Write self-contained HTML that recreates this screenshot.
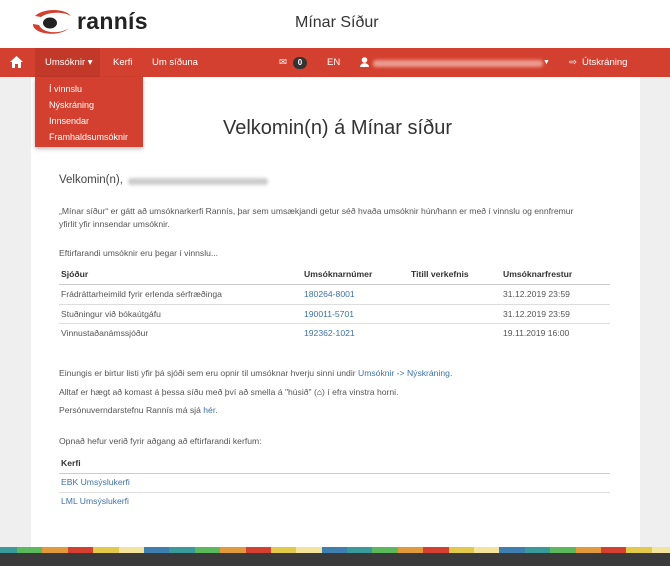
<!DOCTYPE html>
<html><head><meta charset="utf-8"><style>
*{margin:0;padding:0;box-sizing:border-box}
body{width:670px;height:566px;overflow:hidden;background:#efefef;font-family:"Liberation Sans",sans-serif;color:#444;position:relative}
.a{position:absolute;white-space:nowrap}
#hdr{position:absolute;left:0;top:0;width:670px;height:48px;background:#fff}
#nav{position:absolute;left:0;top:48px;width:670px;height:29px;background:#d4402f;color:#fff;font-size:9.5px}
#nav .a{top:9px}
#panel{position:absolute;left:31px;top:77px;width:609px;height:470px;background:#fff}
.t{font-size:8.6px;color:#555}
.lk{color:#3d72a8}
.hl{position:absolute;left:59px;width:551px;height:1px;background:#ddd}
.b{font-weight:bold;color:#333}
.blur{position:absolute;height:7px;border-radius:3px;background:#e8e8e8;filter:blur(1.5px)}
#band{position:absolute;left:0;top:547px;width:670px;height:6px;display:flex}
#band div{width:25.4px;flex:none}
#foot{position:absolute;left:0;top:553px;width:670px;height:13px;background:#3a3a3a}
</style></head><body>
<div id="hdr">
<svg class="a" style="left:29px;top:8px" width="44" height="28" viewBox="0 0 44 28"><path d="M6 8 C14 0 36 0 42 8 C34 3 18 4 12 9 Z" fill="#d4402f"/><path d="M4 16 C3 26 30 30 40 20 C32 26 14 26 10 17 Z" fill="#d4402f"/><ellipse cx="21" cy="15" rx="7" ry="5.5" fill="#222"/></svg>
<div class="a" style="left:77px;top:8px;font-size:23px;font-weight:bold;color:#222;letter-spacing:0.3px">rannís</div>
<div class="a" style="left:295px;top:14px;font-size:16px;color:#333">Mínar Síður</div>
</div>
<div id="nav">
<svg class="a" style="left:10px;top:8px!important" width="13" height="12" viewBox="0 0 13 12"><path d="M6.5 0 L13 6 L11 6 L11 12 L8 12 L8 8 L5 8 L5 12 L2 12 L2 6 L0 6 Z" fill="#fff"/></svg>
<div class="a" style="left:35px;top:0!important;width:65px;height:29px;background:#c2392a"></div>
<div class="a" style="left:45px">Umsóknir ▾</div>
<div class="a" style="left:113px">Kerfi</div>
<div class="a" style="left:152px">Um síðuna</div>
<div class="a" style="left:279px">✉</div>
<div class="a" style="left:293px;top:9px!important;width:14px;height:12px;border-radius:6px;background:#333;font-size:8px;text-align:center;line-height:12px;font-weight:bold">0</div>
<div class="a" style="left:327px">EN</div>
<svg class="a" style="left:360px;top:9px!important" width="9" height="10" viewBox="0 0 9 10"><circle cx="4.5" cy="3" r="2.8" fill="#fff"/><path d="M0 10 C0 5 9 5 9 10Z" fill="#fff"/></svg>
<div class="blur" style="left:373px;top:12px;width:170px;background:#ec9b90"></div>
<div class="a" style="left:543px;font-size:7px;top:11px!important">▼</div>
<div class="a" style="left:569px">⇨</div>
<div class="a" style="left:582px">Útskráning</div>
</div>
<div id="panel"></div>
<div class="a" style="left:35px;top:77px;width:108px;height:70px;background:#d4402f;box-shadow:0 2px 4px rgba(0,0,0,.25)"></div>
<div class="a" style="left:49px;top:81px;font-size:9px;color:#fff;line-height:16px;white-space:normal">Í vinnslu<br>Nýskráning<br>Innsendar<br>Framhaldsumsóknir</div>
<div class="a" style="left:223px;top:117px;font-size:20px;color:#333">Velkomin(n) á Mínar síður</div>
<div class="a" style="left:59px;top:174px;font-size:11.5px;color:#444">Velkomin(n),</div>
<div class="blur" style="left:128px;top:178px;width:140px;background:#ccc"></div>
<div class="a t" style="left:59px;top:205px;line-height:13px">„Mínar síður“ er gátt að umsóknarkerfi Rannís, þar sem umsækjandi getur séð hvaða umsóknir hún/hann er með í vinnslu og ennfremur<br>yfirlit yfir innsendar umsóknir.</div>
<div class="a t" style="left:59px;top:248px">Eftirfarandi umsóknir eru þegar í vinnslu...</div>
<div class="a t b" style="left:61px;top:269px">Sjóður</div>
<div class="a t b" style="left:304px;top:269px">Umsóknarnúmer</div>
<div class="a t b" style="left:411px;top:269px">Titill verkefnis</div>
<div class="a t b" style="left:503px;top:269px">Umsóknarfrestur</div>
<div class="hl" style="top:284px;background:#ccc"></div>
<div class="a t" style="left:61px;top:289px">Frádráttarheimild fyrir erlenda sérfræðinga</div>
<div class="a t lk" style="left:304px;top:289px">180264-8001</div>
<div class="a t" style="left:503px;top:289px">31.12.2019 23:59</div>
<div class="hl" style="top:304px"></div>
<div class="a t" style="left:61px;top:309px">Stuðningur við bókaútgáfu</div>
<div class="a t lk" style="left:304px;top:309px">190011-5701</div>
<div class="a t" style="left:503px;top:309px">31.12.2019 23:59</div>
<div class="hl" style="top:323px"></div>
<div class="a t" style="left:61px;top:328px">Vinnustaðanámssjóður</div>
<div class="a t lk" style="left:304px;top:328px">192362-1021</div>
<div class="a t" style="left:503px;top:328px">19.11.2019 16:00</div>
<div class="a t" style="left:59px;top:368px">Einungis er birtur listi yfir þá sjóði sem eru opnir til umsóknar hverju sinni undir <span class="lk">Umsóknir -&gt; Nýskráning</span>.</div>
<div class="a t" style="left:59px;top:387px">Alltaf er hægt að komast á þessa síðu með því að smella á "húsið" (<b style="color:#222">⌂</b>) í efra vinstra horni.</div>
<div class="a t" style="left:59px;top:405px">Persónuverndarstefnu Rannís má sjá <span class="lk">hér</span>.</div>
<div class="a t" style="left:59px;top:436px">Opnað hefur verið fyrir aðgang að eftirfarandi kerfum:</div>
<div class="a t b" style="left:61px;top:458px">Kerfi</div>
<div class="hl" style="top:473px;background:#ccc"></div>
<div class="a t lk" style="left:61px;top:477px">EBK Umsýslukerfi</div>
<div class="hl" style="top:492px"></div>
<div class="a t lk" style="left:61px;top:496px">LML Umsýslukerfi</div>
<div id="band">
<div style="background:#3a9a9a;width:17px"></div><div style="background:#5cb85c"></div><div style="background:#e09a3a"></div><div style="background:#d4402f"></div><div style="background:#e3c94a"></div><div style="background:#f3e39c"></div><div style="background:#3f7fb0"></div>
<div style="background:#3a9a9a"></div><div style="background:#5cb85c"></div><div style="background:#e09a3a"></div><div style="background:#d4402f"></div><div style="background:#e3c94a"></div><div style="background:#f3e39c"></div><div style="background:#3f7fb0"></div>
<div style="background:#3a9a9a"></div><div style="background:#5cb85c"></div><div style="background:#e09a3a"></div><div style="background:#d4402f"></div><div style="background:#e3c94a"></div><div style="background:#f3e39c"></div><div style="background:#3f7fb0"></div>
<div style="background:#3a9a9a"></div><div style="background:#5cb85c"></div><div style="background:#e09a3a"></div><div style="background:#d4402f"></div><div style="background:#e3c94a"></div><div style="background:#f3e39c"></div><div style="background:#3f7fb0"></div>
</div>
<div id="foot"></div>
</body></html>
